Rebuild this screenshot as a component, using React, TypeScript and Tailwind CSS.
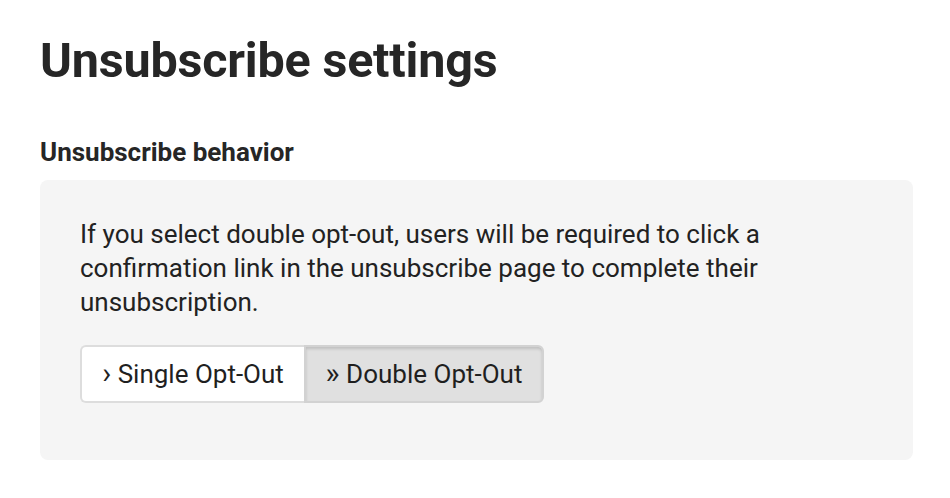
import React from "react";

export default function App() {
  return (
    <div className="min-h-screen bg-white text-[#222222]" style={{ fontFamily: "Roboto, 'Liberation Sans', sans-serif" }}>
      <div className="pl-[40px] pr-[37px] pt-[28px]">
        <h1 className="text-[48.5px] font-bold leading-[66px] tracking-[-0.2px] text-[#262626]">Unsubscribe settings</h1>
        <h2 className="mt-[44px] text-[26px] font-bold leading-[28px] tracking-[0px] text-[#262626]">Unsubscribe behavior</h2>
        <div className="mt-[14px] rounded-[8px] bg-[#f5f5f5] pl-[40px] pr-[40px] pt-[37px] pb-[57px]">
          <p className="text-[26px] leading-[34px] text-[#222222]">
            If you select double opt-out, users will be required to click a<br />
            confirmation link in the unsubscribe page to complete their<br />
            unsubscription.
          </p>
          <div className="mt-[26px] flex">
            <button className="h-[58px] w-[224px] rounded-l-[6px] border-2 border-r-0 border-[#dddddd] bg-white text-[26px] text-[#1f1f1f]">
              <span className="text-[30px] leading-none">›</span> Single Opt-Out
            </button>
            <button className="h-[58px] w-[240px] rounded-r-[6px] border-2 border-[#d2d2d2] bg-[#e0e0e0] text-[26px] text-[#1f1f1f] shadow-[inset_0_2px_3px_rgba(0,0,0,0.15)]">
              <span className="text-[30px] leading-none">»</span> Double Opt-Out
            </button>
          </div>
        </div>
      </div>
    </div>
  );
}
